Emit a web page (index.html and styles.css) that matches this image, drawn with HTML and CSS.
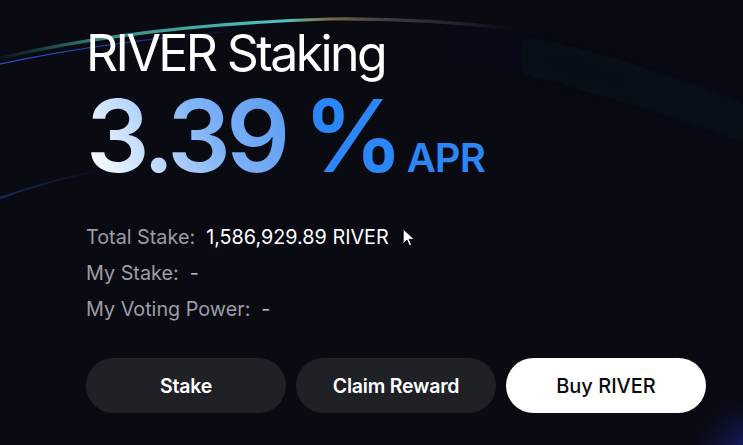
FILE: index.html
```html
<!DOCTYPE html>
<html lang="en">
<head>
<meta charset="utf-8">
<title>RIVER Staking</title>
<link rel="stylesheet" href="styles.css">
</head>
<body>
<div class="page">
  <svg class="bg" width="743" height="445" viewBox="0 0 743 445" aria-hidden="true">
    <defs>
      <linearGradient id="teal" x1="0" y1="0" x2="520" y2="0" gradientUnits="userSpaceOnUse">
        <stop offset="0" stop-color="#3fb3a8" stop-opacity="0.05"/>
        <stop offset="0.2" stop-color="#4cc0b4" stop-opacity="0.7"/>
        <stop offset="0.55" stop-color="#4fc6c4" stop-opacity="1"/>
        <stop offset="0.64" stop-color="#c0a060" stop-opacity="0.6"/>
        <stop offset="0.75" stop-color="#8aa090" stop-opacity="0.35"/>
        <stop offset="1" stop-color="#8090a0" stop-opacity="0"/>
      </linearGradient>
      <linearGradient id="blue" x1="0" y1="0" x2="1" y2="0">
        <stop offset="0" stop-color="#2a5cff" stop-opacity="0.9"/>
        <stop offset="0.6" stop-color="#2a4cd0" stop-opacity="0.6"/>
        <stop offset="1" stop-color="#1a2a80" stop-opacity="0"/>
      </linearGradient>
      <linearGradient id="low" x1="0" y1="0" x2="1" y2="0">
        <stop offset="0" stop-color="#1f3a7a" stop-opacity="0.7"/>
        <stop offset="1" stop-color="#1a2a60" stop-opacity="0"/>
      </linearGradient>
      <radialGradient id="corner" cx="750" cy="455" r="60" gradientUnits="userSpaceOnUse">
        <stop offset="0" stop-color="#1e2aa8" stop-opacity="0.7"/>
        <stop offset="1" stop-color="#10184a" stop-opacity="0"/>
      </radialGradient>
      <linearGradient id="band" x1="380" y1="0" x2="743" y2="0" gradientUnits="userSpaceOnUse">
        <stop offset="0" stop-color="#1a2030" stop-opacity="0"/>
        <stop offset="0.5" stop-color="#161c2c" stop-opacity="0.2"/>
        <stop offset="1" stop-color="#18203a" stop-opacity="0.15"/>
      </linearGradient>
      <filter id="blur4"><feGaussianBlur stdDeviation="12"/></filter>
      <filter id="blur1"><feGaussianBlur stdDeviation="0.6"/></filter>
    </defs>
    <path d="M380 30 Q560 50 760 130" stroke="url(#band)" stroke-width="40" fill="none" filter="url(#blur4)"/>
    <path d="M0 58 Q140 25 330 19 Q430 18 520 30" stroke="url(#teal)" stroke-width="3.2" fill="none" filter="url(#blur1)"/>
    <path d="M0 64 Q110 40 260 29" stroke="url(#blue)" stroke-width="1.2" fill="none"/>
    <path d="M0 198 Q50 180 110 168" stroke="url(#low)" stroke-width="2" fill="none" filter="url(#blur1)"/>
    <rect x="660" y="380" width="83" height="65" fill="url(#corner)"/>
  </svg>

  <main class="content">
    <h1 class="title">RIVER Staking</h1>
    <div class="rate">
      <span class="num">3.39</span>
      <span class="pct">%</span>
      <span class="apr">APR</span>
    </div>

    <div class="stats">
      <div class="row"><span class="label">Total Stake:</span><span class="value">1,586,929.89 RIVER</span></div>
      <div class="row"><span class="label">My Stake:</span><span class="value dim">-</span></div>
      <div class="row"><span class="label">My Voting Power:</span><span class="value dim">-</span></div>
    </div>

    <div class="actions">
      <button class="btn dark">Stake</button>
      <button class="btn dark">Claim Reward</button>
      <button class="btn light">Buy RIVER</button>
    </div>
  </main>

  <svg class="cursor" width="15" height="21" viewBox="0 0 14 20" aria-hidden="true">
    <path d="M1 1 L1 15 L4.5 11.5 L7 17 L9 16 L6.6 10.8 L11.5 10.8 Z" fill="#ffffff" stroke="#000" stroke-width="0.8"/>
  </svg>
</div>
</body>
</html>
```

FILE: styles.css
```css
* { box-sizing: border-box; }

html, body {
  margin: 0;
  padding: 0;
  background: #090a12;
  width: 743px;
  height: 445px;
  overflow: hidden;
}

.page {
  position: relative;
  width: 743px;
  height: 445px;
  background: #090a12;
  font-family: Inter, "Noto Sans", sans-serif;
  color: #ffffff;
}

.bg {
  position: absolute;
  left: 0;
  top: 0;
}

.content {
  position: relative;
  padding: 28px 0 0 86px;
}

.title {
  margin: 0;
  font-size: 50px;
  line-height: 50px;
  font-weight: 400;
  letter-spacing: -2.6px;
  color: #ffffff;
}

.rate {
  margin-top: 8px;
  height: 100px;
  display: flex;
  align-items: baseline;
  line-height: 100px;
}

.num {
  font-size: 100px;
  font-weight: 600;
  letter-spacing: -4.8px;
  background: linear-gradient(60deg, #ffffff 5%, #b9d6fb 35%, #7fb3f7 60%, #5d9df2 95%);
  -webkit-background-clip: text;
  background-clip: text;
  color: transparent;
}

.pct {
  margin-left: 18px;
  font-size: 100px;
  font-weight: 600;
  letter-spacing: -2px;
  color: #2b87f7;
}

.apr {
  margin-left: 5px;
  font-size: 40px;
  font-weight: 600;
  letter-spacing: -1px;
  color: #2b87f7;
}

.stats {
  margin-top: 33px;
  display: flex;
  flex-direction: column;
}

.row {
  display: flex;
  gap: 11px;
  font-size: 19.8px;
  line-height: 36px;
  height: 36px;
}

.label { color: #9c9ea6; }
.value { color: #ffffff; }
.value.dim { color: #b5b7be; }

.actions {
  margin-top: 31px;
  display: flex;
  gap: 10px;
}

.btn {
  width: 200px;
  height: 55px;
  border: none;
  border-radius: 28px;
  font-family: Inter, "Noto Sans", sans-serif;
  font-size: 19.5px;
  font-weight: 600;
  letter-spacing: -0.2px;
  cursor: pointer;
}

.btn.dark {
  background: #202127;
  color: #ffffff;
}

.btn.light {
  background: #ffffff;
  color: #0a0a0f;
  font-size: 20px;
  font-weight: 500;
  letter-spacing: 0;
}

.cursor {
  position: absolute;
  left: 402px;
  top: 228px;
}
```
